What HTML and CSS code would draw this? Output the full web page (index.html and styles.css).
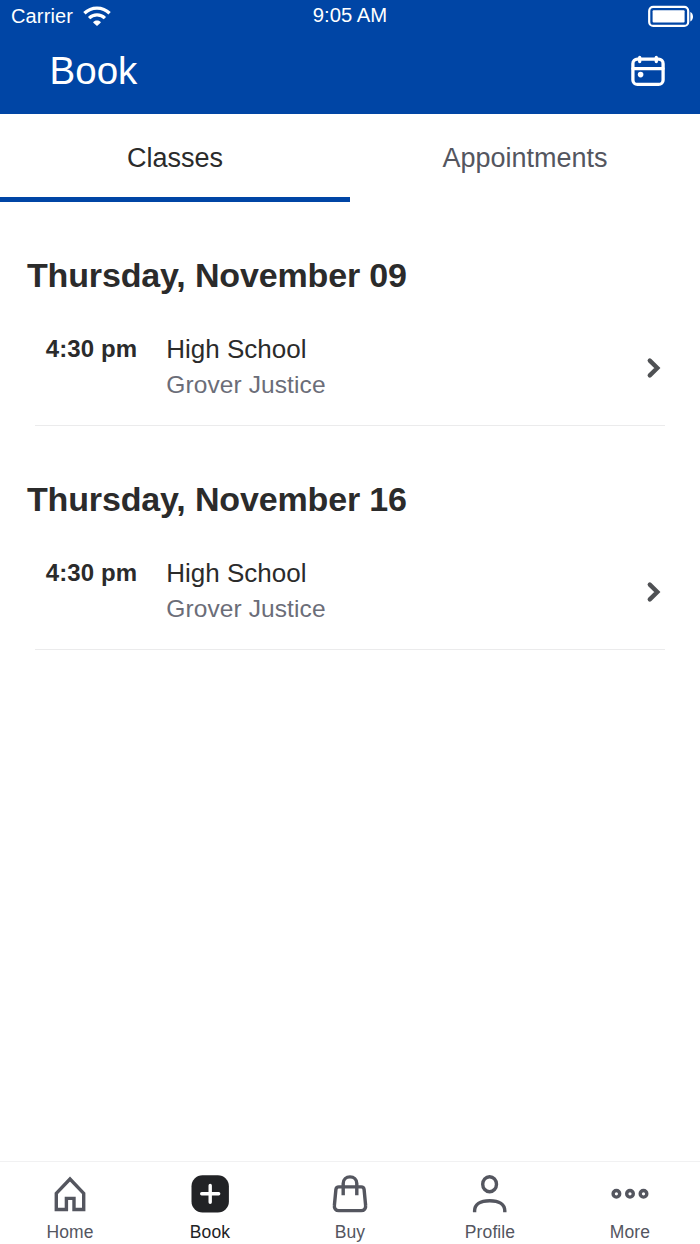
FILE: index.html
```
<!DOCTYPE html>
<html lang="en">
<head>
    <meta charset="UTF-8">
    <meta name="viewport" content="width=device-width, initial-scale=1.0">
    <title>Book</title>
    <link rel="stylesheet" href="styles.css">
</head>
<body>
    <div class="app">
        <header class="header">
            <div class="status-bar">
                <div class="status-left">
                    <span class="carrier">Carrier</span>
                    <svg class="wifi" width="30" height="22" viewBox="0 0 30 22" fill="none" stroke="#fff">
                        <path d="M2.4 8.2C9.4 1.3 20.6 1.3 27.6 8.2" stroke-width="3.3"/>
                        <path d="M7.1 13.1C11.5 8.9 18.5 8.9 22.9 13.1" stroke-width="3.3"/>
                        <path d="M15 21L11.1 17.4C12.6 14.9 17.4 14.9 18.9 17.4Z" fill="#fff" stroke="none"/>
                    </svg>
                </div>
                <span class="clock">9:05 AM</span>
                <div class="status-right">
                    <svg width="46" height="22" viewBox="0 0 46 22">
                        <rect x="1.2" y="1.9" width="39" height="19" rx="4" fill="none" stroke="#fff" stroke-width="2.2"/>
                        <rect x="4.6" y="5.2" width="32" height="12.4" rx="1" fill="#fff"/>
                        <path d="M42.3 7C45.9 8.4 45.9 15 42.3 16.4Z" fill="#fff"/>
                    </svg>
                </div>
            </div>
            <div class="title-bar">
                <h1>Book</h1>
                <svg width="36" height="34" viewBox="0 0 36 34" fill="none" stroke="#fff" stroke-width="3.3" stroke-linecap="round">
                    <rect x="2.9" y="5.2" width="30.2" height="25.2" rx="4.5"/>
                    <path d="M3 14.6H33M9.7 3.4V7.6M26.3 3.4V7.6"/>
                    <circle cx="10.6" cy="20.6" r="2.8" fill="#fff" stroke="none"/>
                </svg>
            </div>
        </header>

        <div class="tabs">
            <a class="tab active">Classes</a>
            <a class="tab">Appointments</a>
        </div>

        <main class="content">
            <section class="day">
                <h2>Thursday, November 09</h2>
                <div class="class-row">
                    <span class="time">4:30 pm</span>
                    <div class="info">
                        <p class="name">High School</p>
                        <p class="teacher">Grover Justice</p>
                    </div>
                    <svg class="chevron" width="16" height="22" viewBox="0 0 16 22">
                        <path d="M3.8 3.6L11.3 11L3.8 18.4"/>
                    </svg>
                </div>
            </section>

            <section class="day">
                <h2>Thursday, November 16</h2>
                <div class="class-row">
                    <span class="time">4:30 pm</span>
                    <div class="info">
                        <p class="name">High School</p>
                        <p class="teacher">Grover Justice</p>
                    </div>
                    <svg class="chevron" width="16" height="22" viewBox="0 0 16 22">
                        <path d="M3.8 3.6L11.3 11L3.8 18.4"/>
                    </svg>
                </div>
            </section>
        </main>

        <nav class="bottom-nav">
            <a class="nav-item">
                <svg width="40" height="40" viewBox="0 0 40 40">
                    <path d="M6.3 35.5V19.4L20 5L33.7 19.4V35.5H24V24.4H16.4V35.5Z"/>
                </svg>
                <span>Home</span>
            </a>
            <a class="nav-item active">
                <svg width="40" height="40" viewBox="0 0 40 40">
                    <rect class="tile" x="1.5" y="1.2" width="37.4" height="37.2" rx="11"/>
                    <path class="plus" d="M20.2 11.4V28.2M11.7 19.8H28.7"/>
                </svg>
                <span>Book</span>
            </a>
            <a class="nav-item">
                <svg width="40" height="40" viewBox="0 0 40 40">
                    <path d="M8.9 12.9H31.1C32.8 12.9 33.9 13.8 34.1 15.5L35.6 31.2C36 34.3 34.2 36.6 31.2 36.6H8.8C5.8 36.6 4 34.3 4.4 31.2L5.9 15.5C6.1 13.8 7.2 12.9 8.9 12.9Z"/>
                    <path d="M13.2 21.2V9.5C13.2 5.5 16.2 2.9 20 2.9S26.8 5.5 26.8 9.5V21.2"/>
                </svg>
                <span>Buy</span>
            </a>
            <a class="nav-item">
                <svg width="40" height="40" viewBox="0 0 40 40">
                    <ellipse cx="19.6" cy="10.2" rx="6.9" ry="7.5"/>
                    <path d="M4.6 38.3V36.8C4.6 30.5 10 26.7 19.7 26.7S34.8 30.5 34.8 36.8V38.3"/>
                </svg>
                <span>Profile</span>
            </a>
            <a class="nav-item">
                <svg width="40" height="40" viewBox="0 0 40 40">
                    <circle cx="6.4" cy="19.8" r="3.3"/>
                    <circle cx="20" cy="19.8" r="3.3"/>
                    <circle cx="33.5" cy="19.8" r="3.3"/>
                </svg>
                <span>More</span>
            </a>
        </nav>
    </div>
</body>
</html>
```
FILE: styles.css
```
:root {
    --primary-color: #0045a5;
    --text-color: #2b2b2b;
    --muted-color: #54565f;
    --border-color: #ebebec;
}

* {
    margin: 0;
    padding: 0;
    box-sizing: border-box;
}

body {
    font-family: "Liberation Sans", Arial, sans-serif;
    background-color: #fff;
    color: var(--text-color);
}

svg {
    display: block;
    flex-shrink: 0;
}

.app {
    display: flex;
    flex-direction: column;
    height: 100vh;
}

/* Header */
.header {
    height: 114.3px;
    background-color: var(--primary-color);
    color: #fff;
}

.status-bar {
    display: grid;
    grid-template-columns: 1fr auto 1fr;
    height: 32px;
    padding: 0 6px 0 11px;
    font-size: 20px;
    line-height: 32px;
}

.status-left {
    display: flex;
    align-items: center;
    gap: 9px;
}

.carrier {
    letter-spacing: 0.15px;
}

.clock {
    font-size: 20.3px;
    line-height: 31px;
    padding-right: 5px;
}

.status-right {
    display: flex;
    justify-content: flex-end;
    align-items: center;
}

.title-bar {
    display: flex;
    align-items: center;
    justify-content: space-between;
    height: 78px;
    padding: 0 34px 0 49.6px;
}

h1 {
    font-size: 38.5px;
    font-weight: 400;
    line-height: 78px;
}

/* Tabs */
.tabs {
    display: flex;
    height: 88px;
}

.tab {
    flex: 1;
    font-size: 27px;
    line-height: 88px;
    text-align: center;
    color: var(--muted-color);
}

.tab.active {
    color: var(--text-color);
    box-shadow: inset 0 -5px var(--primary-color);
}

/* Schedule */
.content {
    flex: 1;
    padding: 53.2px 35px 0 27px;
}

.day {
    margin-bottom: 53.2px;
}

h2 {
    font-size: 34px;
    line-height: 40px;
    letter-spacing: -0.15px;
}

.class-row {
    display: flex;
    margin-left: 8px;
    padding: 36.5px 3px 23px 10.8px;
    border-bottom: 1px solid var(--border-color);
}

.time {
    width: 120.5px;
    font-size: 24px;
    font-weight: 700;
    line-height: 34px;
    letter-spacing: 0.1px;
}

.info {
    flex: 1;
    line-height: 35px;
}

.name {
    font-size: 26px;
}

.teacher {
    font-size: 24.5px;
    letter-spacing: 0.1px;
    color: #6b6d78;
}

.chevron {
    align-self: center;
    margin-top: 3px;
    fill: none;
    stroke: #4f5154;
    stroke-width: 4.4;
    stroke-linecap: round;
}

/* Bottom navigation */
.bottom-nav {
    display: flex;
    height: 83px;
    padding-top: 12px;
    border-top: 1px solid #f1f1f2;
}

.nav-item {
    display: flex;
    flex: 1;
    flex-direction: column;
    align-items: center;
    font-size: 17.5px;
    line-height: 36px;
    letter-spacing: 0.1px;
    color: var(--muted-color);
}

.nav-item svg {
    fill: none;
    stroke: currentColor;
    stroke-width: 3.4;
}

.nav-item.active {
    color: #222326;
}

.nav-item .tile {
    fill: currentColor;
    stroke: none;
}

.nav-item .plus {
    stroke: #fff;
    stroke-linecap: round;
}
```
